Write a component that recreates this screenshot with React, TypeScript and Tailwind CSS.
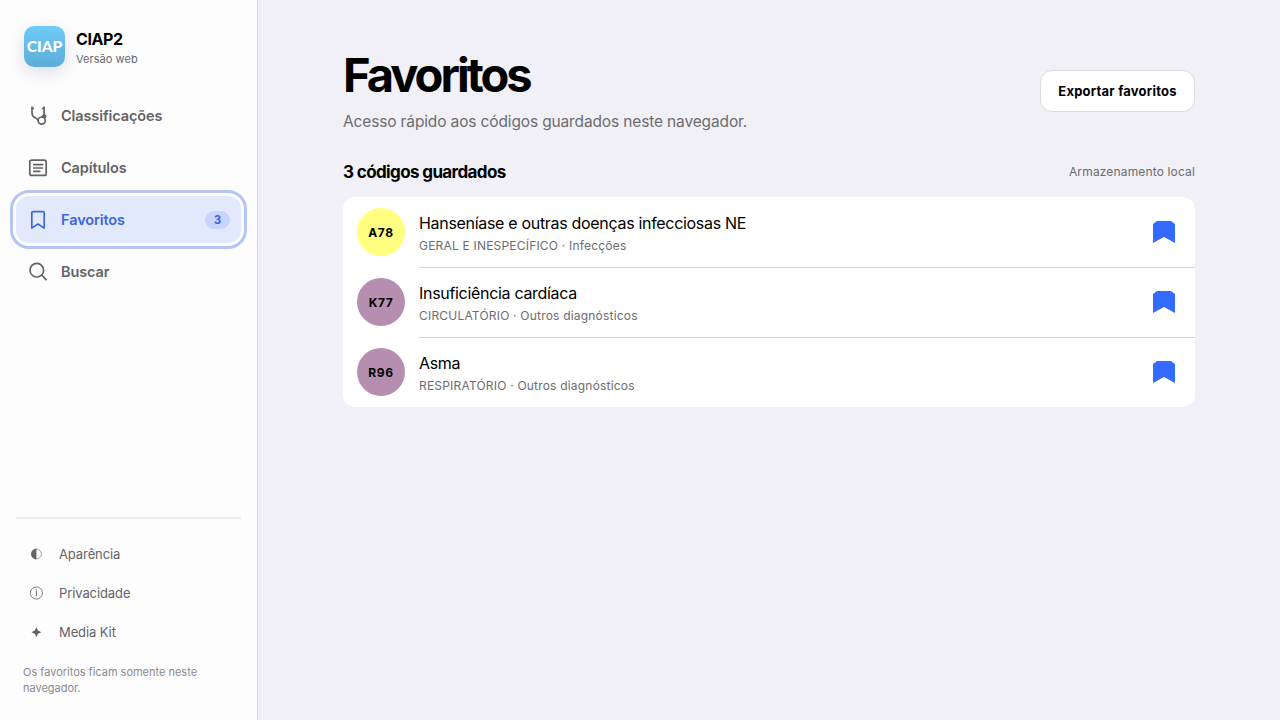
import React from 'react';

interface NavItem {
  label: string;
  icon: React.ReactNode;
  active?: boolean;
  count?: number;
}

interface FavoriteCode {
  code: string;
  title: string;
  subtitle: string;
  badge: string;
}

const StethoscopeIcon = () => (
  <svg className="h-5 w-5" viewBox="0 0 20 20" fill="none" stroke="currentColor" strokeWidth="1.7" strokeLinecap="round" strokeLinejoin="round">
    <path d="M4 1.2v1.2h1.3M4 2.2v4.4c0 3.2 1.6 4.8 3.9 5.6 1.6.6 2.2 1.2 2.2 2.4" />
    <path d="M16.1 1.2v1.2h-1.3M16.1 2.2V7c0 1.6-.7 2.9-1.9 3.7" />
    <circle cx="13.7" cy="14.6" r="3.6" />
    <circle cx="16.5" cy="10.3" r="1.2" fill="currentColor" />
  </svg>
);

const ListIcon = () => (
  <svg className="h-5 w-5" viewBox="0 0 20 20" fill="none" stroke="currentColor" strokeWidth="1.7" strokeLinecap="round" strokeLinejoin="round">
    <rect x="1.8" y="2.2" width="16.4" height="15.2" rx="2" />
    <path d="M5.8 6.7h8.6M5.8 10h8.6M5.8 13.3h6" />
  </svg>
);

const BookmarkIcon = () => (
  <svg className="h-5 w-5" viewBox="0 0 20 20" fill="none" stroke="currentColor" strokeWidth="1.7" strokeLinecap="round" strokeLinejoin="round">
    <path d="M5 1.6h10a1.2 1.2 0 0 1 1.2 1.2v15.3L10 14l-6.2 4.1V2.8A1.2 1.2 0 0 1 5 1.6Z" />
  </svg>
);

const SearchIcon = () => (
  <svg className="h-5 w-5" viewBox="0 0 20 20" fill="none" stroke="currentColor" strokeWidth="1.7" strokeLinecap="round">
    <circle cx="8.8" cy="8.2" r="6.8" />
    <path d="m13.8 13.2 4.3 4.4" />
  </svg>
);

const navItems: NavItem[] = [
  { label: 'Classificações', icon: <StethoscopeIcon /> },
  { label: 'Capítulos', icon: <ListIcon /> },
  { label: 'Favoritos', icon: <BookmarkIcon />, active: true, count: 3 },
  { label: 'Buscar', icon: <SearchIcon /> },
];

const footerLinks = [
  {
    label: 'Aparência',
    icon: (
      <svg className="mb-px h-3.5 w-3.5" viewBox="0 0 14 14" fill="none">
        <circle cx="7.4" cy="7" r="5" stroke="currentColor" strokeWidth="0.6" />
        <path d="M7.4 1.8a5.2 5.2 0 0 0 0 10.4Z" fill="currentColor" />
      </svg>
    ),
  },
  {
    label: 'Privacidade',
    icon: (
      <svg className="mb-px h-3.5 w-3.5" viewBox="0 0 14 14" fill="none" stroke="currentColor">
        <circle cx="7.4" cy="7" r="6.1" strokeWidth="0.8" />
        <path d="M7.5 5.5v4.8M6.7 5.7h.8" strokeWidth="0.9" />
        <circle cx="7.4" cy="3.8" r="0.65" fill="currentColor" stroke="none" />
      </svg>
    ),
  },
  {
    label: 'Media Kit',
    icon: (
      <svg className="mb-px h-3.5 w-3.5" viewBox="0 0 14 14" fill="currentColor">
        <path d="M7.4 2.2 9 5.6 12.3 7.2 9 8.8 7.4 12.2 5.8 8.8 2.5 7.2 5.8 5.6Z" />
      </svg>
    ),
  },
];

const favorites: FavoriteCode[] = [
  { code: 'A78', title: 'Hanseníase e outras doenças infecciosas NE', subtitle: 'GERAL E INESPECÍFICO · Infecções', badge: 'bg-[#ffff80]' },
  { code: 'K77', title: 'Insuficiência cardíaca', subtitle: 'CIRCULATÓRIO · Outros diagnósticos', badge: 'bg-[#b68eb0]' },
  { code: 'R96', title: 'Asma', subtitle: 'RESPIRATÓRIO · Outros diagnósticos', badge: 'bg-[#b68eb0]' },
];

const Sidebar = () => (
  <aside className="flex w-[258px] shrink-0 flex-col border-r border-[#d9d9de] bg-[#fdfdfe] px-4 pt-[26px] pb-6">
    <div className="flex items-center gap-[11px] pl-2">
      <div className="flex h-[41px] w-[41px] items-center justify-center rounded-[10px] bg-linear-to-b from-[#6fcbf8] to-[#5badd8] font-[family-name:Lato] text-[15.5px] font-black text-white shadow-[0_6px_16px_rgba(60,60,120,0.16)]">
        CIAP
      </div>
      <div className="pt-[2px]">
        <div className="text-[16px] leading-[20px] font-bold tracking-[-0.4px] text-black">CIAP2</div>
        <div className="mt-[3px] text-[11px] leading-[14px] tracking-[0.05px] text-[#68686c]">Versão web</div>
      </div>
    </div>

    <nav className="mt-[25px] flex flex-col gap-[5px]">
      {navItems.map((item) => (
        <a
          key={item.label}
          className={`flex h-[47px] items-center gap-[13px] rounded-[13px] pr-[11px] pl-3 text-[14.5px] font-semibold tracking-[-0.1px] ${
            item.active
              ? 'bg-[#e3e9fd] text-[#3b66e0] outline-3 outline-offset-3 outline-[#b5c5f5]'
              : 'text-[#636366]'
          }`}
        >
          {item.icon}
          <span>{item.label}</span>
          {item.count && (
            <span className="ml-auto flex h-[18px] w-[25px] items-center justify-center rounded-full bg-[#c7d5fd] pt-[2px] text-[11.5px] font-bold tracking-normal">
              {item.count}
            </span>
          )}
        </a>
      ))}
    </nav>

    <div className="mt-auto border-t-2 border-[#ebebed] pt-4">
      {footerLinks.map((link) => (
        <a key={link.label} className="flex h-[39px] items-center gap-[16px] pl-[13px] text-[13px] tracking-[-0.1px] text-[#636366]">
          {link.icon}
          {link.label}
        </a>
      ))}
      <p className="mt-3 pl-[7px] text-[11px] leading-4 tracking-[-0.01px] text-[#8a8a8e]">
        Os favoritos ficam somente neste navegador.
      </p>
    </div>
  </aside>
);

const FavoriteRow: React.FC<{ item: FavoriteCode; first: boolean }> = ({ item, first }) => (
  <li className="flex h-[70px] items-center gap-[14px] pl-[14px]">
    <span className={`flex h-12 w-12 shrink-0 items-center justify-center rounded-full pt-[2px] text-[12px] font-bold tracking-[0.6px] text-black ${item.badge}`}>
      {item.code}
    </span>
    <div className={`flex h-full flex-1 items-center justify-between pr-5 ${first ? '' : 'shadow-[inset_0_1px_0_#d5d5d9]'}`}>
      <div className="pt-px">
        <div className="text-[16px] leading-[22px] tracking-[-0.31px] text-black">{item.title}</div>
        <div className="mt-1 text-[12px] leading-4 tracking-[0.2px] text-[#6c6c70]">{item.subtitle}</div>
      </div>
      <svg className="h-[22px] w-[22px] text-[#336aff]" viewBox="0 0 22 22" fill="currentColor">
        <path d="M4 0h14l4 3v19l-11-6-11 6V3Z" />
      </svg>
    </div>
  </li>
);

export default function App() {
  return (
    <div className="flex h-[720px] w-[1280px] overflow-hidden bg-[#f0f0f6] font-['Inter',sans-serif]">
      <Sidebar />
      <main className="flex-1 pt-[50px] pr-[85px] pl-[85px]">
        <header className="flex items-start justify-between">
          <div>
            <h1 className="text-[47px] leading-[50px] font-bold tracking-[-3px] text-black">Favoritos</h1>
            <p className="mt-2.5 text-[15.5px] leading-6 tracking-[-0.14px] text-[#6c6c70]">Acesso rápido aos códigos guardados neste navegador.</p>
          </div>
          <button className="mt-5 h-[42px] w-[155px] rounded-xl border border-[#dadadf] bg-white pt-[2px] text-[13px] font-bold tracking-[0.22px] text-black">
            Exportar favoritos
          </button>
        </header>

        <section className="mt-[26px]">
          <div className="flex items-center justify-between">
            <h2 className="text-[17px] leading-6 font-bold tracking-[-0.62px] text-black">3 códigos guardados</h2>
            <span className="text-[12px] tracking-[0.15px] text-[#6c6c70]">Armazenamento local</span>
          </div>
          <ul className="mt-[13px] overflow-hidden rounded-xl bg-white">
            {favorites.map((item, i) => (
              <FavoriteRow key={item.code} item={item} first={i === 0} />
            ))}
          </ul>
        </section>
      </main>
    </div>
  );
}
